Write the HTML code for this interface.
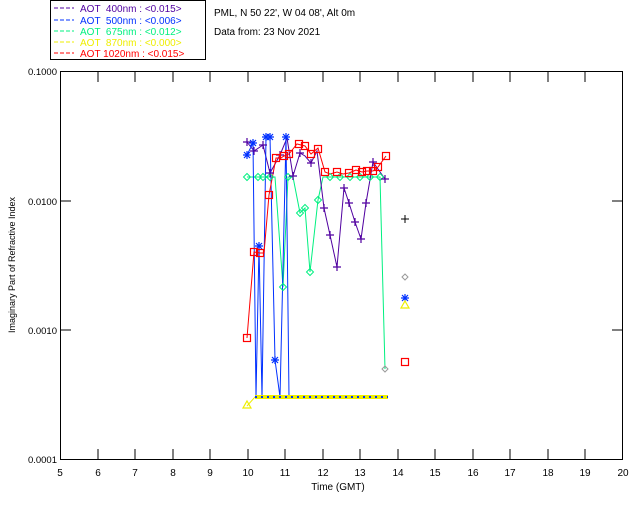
<!DOCTYPE html>
<html><head><style>
html,body{margin:0;padding:0;background:#fff;width:640px;height:512px;overflow:hidden}
svg{display:block;font-family:"Liberation Sans","DejaVu Sans",sans-serif;font-size:10px}
</style></head><body>
<svg width="640" height="512" viewBox="0 0 640 512" xmlns="http://www.w3.org/2000/svg">
<defs>
<g id="sq"><rect x="-3.5" y="-3.5" width="7" height="7" fill="none" stroke="#f00" stroke-width="1.2"/></g>
<g id="dm"><path d="M0,-3.5 L3.5,0 L0,3.5 L-3.5,0Z" fill="none" stroke="#00f080" stroke-width="1"/></g>
<g id="dmg"><path d="M0,-3 L3,0 L0,3 L-3,0Z" fill="none" stroke="#999" stroke-width="1"/></g>
<g id="pl"><path d="M-4,0H4M0,-4V4" stroke="#5000a0" stroke-width="1.2"/></g>
<g id="pk"><path d="M-4,0H4M0,-4V4" stroke="#000" stroke-width="1"/></g>
<g id="as"><path d="M-4,0H4M0,-4V4M-3,-3L3,3M-3,3L3,-3" stroke="#0030ff" stroke-width="1.2"/></g>
<g id="tr"><path d="M0,-4 L4,3 L-4,3Z" fill="none" stroke="#ee0" stroke-width="1.2"/></g>
</defs>
<!-- legend -->
<rect x="50.5" y="0.5" width="155" height="59" fill="none" stroke="#000"/>
<g font-size="10">
<line x1="54" y1="8" x2="74" y2="8" stroke="#5000a0" stroke-dasharray="4,2"/><text x="80" y="12" fill="#5000a0" xml:space="preserve">AOT  400nm : &lt;0.015&gt;</text>
<line x1="54" y1="20" x2="74" y2="20" stroke="#0030ff" stroke-dasharray="4,2"/><text x="80" y="24" fill="#0030ff" xml:space="preserve">AOT  500nm : &lt;0.006&gt;</text>
<line x1="54" y1="31" x2="74" y2="31" stroke="#00f080" stroke-dasharray="4,2"/><text x="80" y="35" fill="#00f080" xml:space="preserve">AOT  675nm : &lt;0.012&gt;</text>
<line x1="54" y1="42" x2="74" y2="42" stroke="#ee0" stroke-dasharray="4,2"/><text x="80" y="46" fill="#ee0" xml:space="preserve">AOT  870nm : &lt;0.000&gt;</text>
<line x1="54" y1="53" x2="74" y2="53" stroke="#f00" stroke-dasharray="4,2"/><text x="80" y="57" fill="#f00" xml:space="preserve">AOT 1020nm : &lt;0.015&gt;</text>
</g>
<text x="214" y="16" fill="#000">PML, N 50 22', W 04 08', Alt 0m</text>
<text x="214" y="35" fill="#000">Data from: 23 Nov 2021</text>
<!-- axes -->
<rect x="60.5" y="71.5" width="562" height="388" fill="none" stroke="#000"/>
<g stroke="#000">
<path d="M98,72v10M135,72v10M173,72v10M210,72v10M248,72v10M285,72v10M323,72v10M360,72v10M398,72v10M435,72v10M473,72v10M510,72v10M548,72v10M585,72v10"/>
<path d="M98,459v-10M135,459v-10M173,459v-10M210,459v-10M248,459v-10M285,459v-10M323,459v-10M360,459v-10M398,459v-10M435,459v-10M473,459v-10M510,459v-10M548,459v-10M585,459v-10"/>
<path d="M61,201h10M61,330h10M622,201h-10M622,330h-10"/>
</g>
<g fill="#000" text-anchor="end" font-size="9.5">
<text x="57" y="75">0.1000</text><text x="57" y="205">0.0100</text><text x="57" y="334">0.0010</text><text x="57" y="463">0.0001</text>
</g>
<g fill="#000" text-anchor="middle">
<text x="60" y="476">5</text><text x="98" y="476">6</text><text x="135" y="476">7</text><text x="173" y="476">8</text><text x="210" y="476">9</text><text x="248" y="476">10</text><text x="285" y="476">11</text><text x="323" y="476">12</text><text x="360" y="476">13</text><text x="398" y="476">14</text><text x="435" y="476">15</text><text x="473" y="476">16</text><text x="510" y="476">17</text><text x="548" y="476">18</text><text x="585" y="476">19</text><text x="623" y="476">20</text>
<text x="338" y="490">Time (GMT)</text>
<text transform="translate(15,265) rotate(-90)" font-size="9">Imaginary Part of Refractive Index</text>
</g>
<!-- series -->
<polyline fill="none" stroke="#00f080" points="247,177 258,177 263,177 270,177 275,177 283,287 288,177 293,177 300,213 305,208 310,272 318,200 323,177 330,177 340,177 350,177 360,177 370,177 380,177 385,369"/>
<polyline fill="none" stroke="#5000a0" points="247,142 254,151 263,145 270,173 280,155 287,138 293,176 300,153 305,156 311,163 317,151 324,208 330,235 337,267 344,188 349,203 355,222 361,239 366,203 373,162 385,179"/>
<polyline fill="none" stroke="#0030ff" points="247,155 253,143 256,397 259,246 262,397 266,137 270,137 275,360 280,397 286,137 289,397 388,397"/>
<polyline fill="none" stroke="#ee0" points="247,406 255,397 388,397"/>
<polyline fill="none" stroke="#f00" points="247,338 254,252 260,253 264,253 269,195 276,158 281,158 284,156 289,154 297,144 305,146 311,154 318,148 325,172 330,174 337,172 343,174 349,173 356,170 362,172 367,171 373,171 378,167 386,156"/>
<!-- markers -->
<g>
<use href="#dm" x="247" y="177"/><use href="#dm" x="258" y="177"/><use href="#dm" x="263" y="177"/><use href="#dm" x="270" y="177"/><use href="#dm" x="283" y="287"/><use href="#dm" x="288" y="177"/><use href="#dm" x="300" y="213"/><use href="#dm" x="305" y="208"/><use href="#dm" x="310" y="272"/><use href="#dm" x="318" y="200"/><use href="#dm" x="330" y="177"/><use href="#dm" x="340" y="177"/><use href="#dm" x="350" y="177"/><use href="#dm" x="360" y="177"/><use href="#dm" x="370" y="177"/><use href="#dm" x="380" y="177"/><use href="#dmg" x="385" y="369"/><use href="#dmg" x="405" y="277"/>
<use href="#pl" x="247" y="142"/><use href="#pl" x="254" y="151"/><use href="#pl" x="263" y="145"/><use href="#pl" x="270" y="173"/><use href="#pl" x="280" y="155"/><use href="#pl" x="293" y="176"/><use href="#pl" x="300" y="153"/><use href="#pl" x="311" y="163"/><use href="#pl" x="324" y="208"/><use href="#pl" x="330" y="235"/><use href="#pl" x="337" y="267"/><use href="#pl" x="344" y="188"/><use href="#pl" x="349" y="203"/><use href="#pl" x="355" y="222"/><use href="#pl" x="361" y="239"/><use href="#pl" x="366" y="203"/><use href="#pl" x="373" y="162"/><use href="#pl" x="385" y="179"/><use href="#pk" x="405" y="219"/>
<use href="#as" x="247" y="155"/><use href="#as" x="253" y="143"/><use href="#as" x="259" y="246"/><use href="#as" x="266" y="137"/><use href="#as" x="270" y="137"/><use href="#as" x="275" y="360"/><use href="#as" x="286" y="137"/><use href="#as" x="405" y="298"/>
<use href="#tr" x="247" y="405"/><use href="#tr" x="405" y="305"/>
<use href="#sq" x="247" y="338"/><use href="#sq" x="254" y="252"/><use href="#sq" x="260" y="253"/><use href="#sq" x="269" y="195"/><use href="#sq" x="276" y="158"/><use href="#sq" x="284" y="156"/><use href="#sq" x="289" y="154"/><use href="#sq" x="299" y="144"/><use href="#sq" x="305" y="146"/><use href="#sq" x="311" y="154"/><use href="#sq" x="318" y="149"/><use href="#sq" x="325" y="172"/><use href="#sq" x="337" y="172"/><use href="#sq" x="349" y="173"/><use href="#sq" x="356" y="170"/><use href="#sq" x="362" y="172"/><use href="#sq" x="367" y="171"/><use href="#sq" x="373" y="171"/><use href="#sq" x="378" y="167"/><use href="#sq" x="386" y="156"/><use href="#sq" x="405" y="362"/>
</g>
<path d="M255,397 H388" stroke="#ee0" stroke-width="4"/>
<path d="M255,397 H388" stroke="#0030ff" stroke-width="2" stroke-dasharray="2,4"/>
</svg>
</body></html>
